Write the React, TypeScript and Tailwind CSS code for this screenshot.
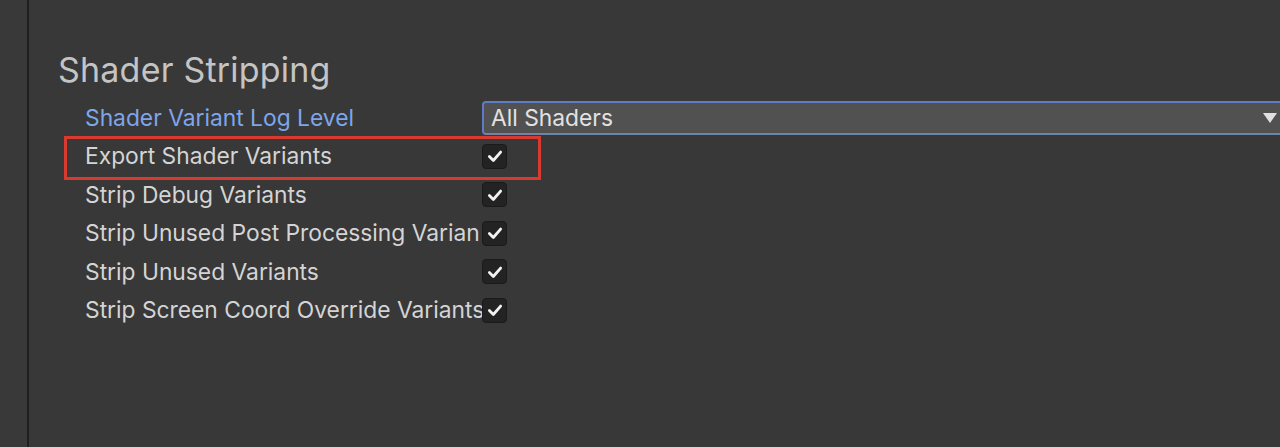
import React from 'react';

const rows = [
  'Export Shader Variants',
  'Strip Debug Variants',
  'Strip Unused Post Processing Varian',
  'Strip Unused Variants',
  'Strip Screen Coord Override Variants',
];

function Check() {
  return (
    <div className="w-[25px] h-[25px] rounded-[4px] bg-[#232323] border border-[#1a1a1a] flex items-center justify-center shrink-0">
      <svg width="18" height="18" viewBox="0 0 16 16" fill="none">
        <path d="M3 8.5 L6.5 12 L13 4.5" stroke="#f2f2f2" strokeWidth="2.5" strokeLinecap="round" strokeLinejoin="round" />
      </svg>
    </div>
  );
}

export default function App() {
  return (
    <div
      className="w-[1280px] h-[447px] bg-[#383838] flex overflow-hidden"
      style={{ fontFamily: 'Inter, "Noto Sans", sans-serif' }}
    >
      <div className="w-[27px] h-full bg-[#393939] shrink-0" />
      <div className="w-[2px] h-full bg-[#1f1f1f] shrink-0" />

      <div className="flex-1 pl-[29px] pt-[48px]">
        <h1 className="text-[34px] leading-[44px] text-[#c4c4c4] tracking-[0.2px]">Shader Stripping</h1>

        <div className="mt-[7px] flex flex-col">
          <div className="h-[38px] flex items-center">
            <div className="w-[424px] pl-[27px] text-[22.8px] text-[#7ea6ea] whitespace-nowrap overflow-hidden">
              Shader Variant Log Level
            </div>
            <div className="flex-1 h-[34px] -mr-[10px] rounded-[4px] bg-[#515151] border-2 border-[#5e7cc4] border-b-[#6b86a8] flex items-center pl-[7px] pr-[11px]">
              <span className="flex-1 text-[22.8px] text-[#e2e2e2]">All Shaders</span>
              <svg width="14" height="10" viewBox="0 0 14 10">
                <path d="M0 0 H14 L7 10 Z" fill="#e0e0e0" />
              </svg>
            </div>
          </div>

          {rows.map((label, i) => (
            <div key={label} className="relative h-[38.5px] flex items-center">
              {i === 0 && (
                <div className="absolute left-[6px] top-[-1px] w-[477px] h-[44px] border-[3px] border-[#d93a2f]" />
              )}
              <div className="w-[397px] ml-[27px] text-[22.8px] text-[#d4d4d4] whitespace-nowrap">
                {label}
              </div>
              <div>
                <Check />
              </div>
            </div>
          ))}
        </div>
      </div>
    </div>
  );
}
